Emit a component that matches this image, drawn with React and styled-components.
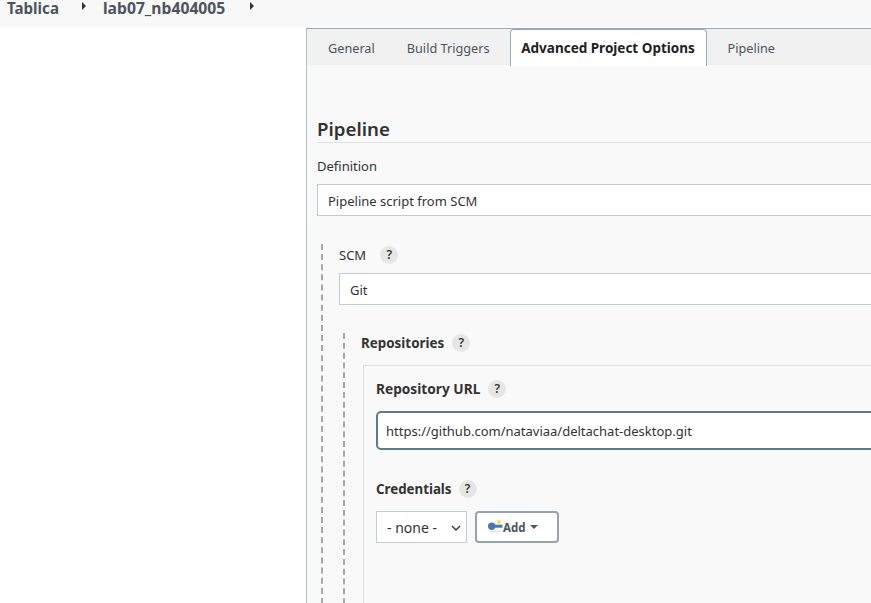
import React from 'react';
import styled, { createGlobalStyle } from 'styled-components';

const Global = createGlobalStyle`
  html, body { margin: 0; padding: 0; background: #fff; overflow: hidden; }
  body { font-family: "Noto Sans", "Open Sans", sans-serif; font-size: 13px; color: #333; }
`;
const Page = styled.div`width: 871px; height: 603px; overflow: hidden; display: flex; flex-direction: column;`;
const TopBar = styled.div`height: 27px; flex: none; background: #f8f8f8; display: flex; align-items: flex-start; padding: 0 0 0 7px; box-sizing: border-box; margin-bottom: 1px;`;
const Crumb = styled.span`font-size: ${p => p.$size}px; font-weight: 700; color: #4d545d; line-height: 17px;`;
const Caret = styled.span`width: 0; height: 0; border-left: 4px solid #333; border-top: 4px solid transparent; border-bottom: 4px solid transparent; margin: ${p => p.$m};`;
const Body = styled.div`flex: 1; display: flex; min-height: 0;`;
const Side = styled.div`width: 306px; flex: none; background: #fff;`;
const Main = styled.div`flex: 1; min-width: 0; border-left: 1px solid #b4bfc9; border-top: 1px solid #9aa9b5; background: #f9f9f9; overflow: hidden;`;
const Tabs = styled.div`height: 36px; background: #f1f1f1; display: flex; padding-left: 21px; box-sizing: border-box;`;
const Tab = styled.div`font-size: 12.7px; color: #4d545d; line-height: 38px; margin-right: 32px;`;
const ActiveTab = styled.div`font-size: 13.5px; font-weight: 700; color: #222; background: #fff; height: 37px; width: 197px; box-sizing: border-box; margin: 0 21px 0 -12px; text-align: center; line-height: 37px; border: 1px solid #9aa9b5; border-bottom: 0; border-radius: 4px 4px 0 0;`;
const Content = styled.div`padding: 51px 0 0 10px; width: 700px;`;
const Heading = styled.div`font-size: 18.7px; font-weight: 600; color: #333; line-height: 26px; border-bottom: 1px solid #e2e2e2; height: 26px;`;
const Label = styled.div`font-size: ${p => p.$size || 13}px; color: #333; line-height: 18px; display: flex; align-items: center; gap: ${p => p.$gap || 8}px; font-weight: ${p => p.$bold ? 700 : 400}; margin: ${p => p.$m || 0};`;
const Help = styled.span`width: 18px; height: 18px; border-radius: 50%; background: #e6e6e6; color: #333; display: inline-flex; align-items: center; justify-content: center; font-size: 12px; font-weight: 600;`;
const Field = styled.div`height: 32px; box-sizing: border-box; border: 1px solid #c3ccd1; background: #fff; padding: 2px 0 0 10px; display: flex; align-items: center; font-size: 13px; color: #333; margin: ${p => p.$m || 0};`;
const Nested = styled.div`border-left: 2px dashed #a8a8a8; padding: 2px 0 0 16px; margin: ${p => p.$m};`;
const Box = styled.div`border: 1px solid #e0e0e0; border-right: 0; background: #f9f9f9; padding: 14px 0 70px 12px; margin: 13px 0 0 2px;`;
const UrlField = styled.div`height: 39px; box-sizing: border-box; border: 2px solid #5d7a8c; border-radius: 5px; background: #fff; padding: 0 0 0 8px; display: flex; align-items: center; font-size: 13px; color: #333; margin-top: 13px;`;
const Row = styled.div`display: flex; gap: 8px; margin-top: 13px;`;
const SelectBox = styled.div`width: 91px; height: 32px; box-sizing: border-box; border: 1px solid #c3ccd1; background: #fff; display: flex; align-items: center; justify-content: space-between; padding: 1px 5px 0 10px; font-size: 14px; color: #333;`;
const AddBtn = styled.div`width: 84px; height: 32px; box-sizing: border-box; border: 2px solid #97a4ad; border-radius: 4px; background: #fff; display: flex; align-items: center; padding-left: 11px; font-size: 11.5px; font-weight: 700; color: #4d545d;`;
const DownCaret = styled.span`width: 0; height: 0; border-top: 4px solid #4d545d; border-left: 4px solid transparent; border-right: 4px solid transparent; margin-left: 4px;`;
const KeySvg = styled.svg`flex: none; margin-top: -1px;`;

const Key = () => (
  <KeySvg width="15" height="13" viewBox="0 0 15 13">
    <ellipse cx="7" cy="11.5" rx="6" ry="1" fill="#e4e4e4" />
    <circle cx="11" cy="2" r="2" fill="#f5e642" />
    <circle cx="3.7" cy="6.3" r="3.7" fill="#4a78a8" />
    <rect x="5" y="4.7" width="9.5" height="3" fill="#4a78a8" />
  </KeySvg>
);
const Chevron = () => (
  <svg width="10" height="6" viewBox="0 0 10 6"><path d="M1 1l4 4 4-4" fill="none" stroke="#333" strokeWidth="1.4" /></svg>
);

export default function App() {
  return (
    <Page>
      <Global />
      <TopBar>
        <Crumb $size={15.1}>Tablica</Crumb>
        <Caret $m="2px 17px 0 23px" />
        <Crumb $size={15.7}>lab07_nb404005</Crumb>
        <Caret $m="2px 0 0 25px" />
      </TopBar>
      <Body>
        <Side />
        <Main>
          <Tabs>
            <Tab>General</Tab>
            <Tab>Build Triggers</Tab>
            <ActiveTab>Advanced Project Options</ActiveTab>
            <Tab>Pipeline</Tab>
          </Tabs>
          <Content>
            <Heading>Pipeline</Heading>
            <Label $m="14px 0 0 0">Definition</Label>
            <Field $m="9px 0 0 0">Pipeline script from SCM</Field>
            <Nested $m="28px 0 0 4px">
              <Label $gap={14}>SCM <Help>?</Help></Label>
              <Field $m="9px 0 0 0">Git</Field>
              <Nested $m="28px 0 0 4px">
                <Label $bold $size={13.4} $m="-1px 0 1px 0">Repositories <Help>?</Help></Label>
                <Box>
                  <Label $bold $size={13.7}>Repository URL <Help>?</Help></Label>
                  <UrlField>https://github.com/nataviaa/deltachat-desktop.git</UrlField>
                  <Label $bold $size={13.3} $gap={7} $m="30px 0 0 0">Credentials <Help>?</Help></Label>
                  <Row>
                    <SelectBox>- none - <Chevron /></SelectBox>
                    <AddBtn><Key />Add<DownCaret /></AddBtn>
                  </Row>
                </Box>
              </Nested>
            </Nested>
          </Content>
        </Main>
      </Body>
    </Page>
  );
}
